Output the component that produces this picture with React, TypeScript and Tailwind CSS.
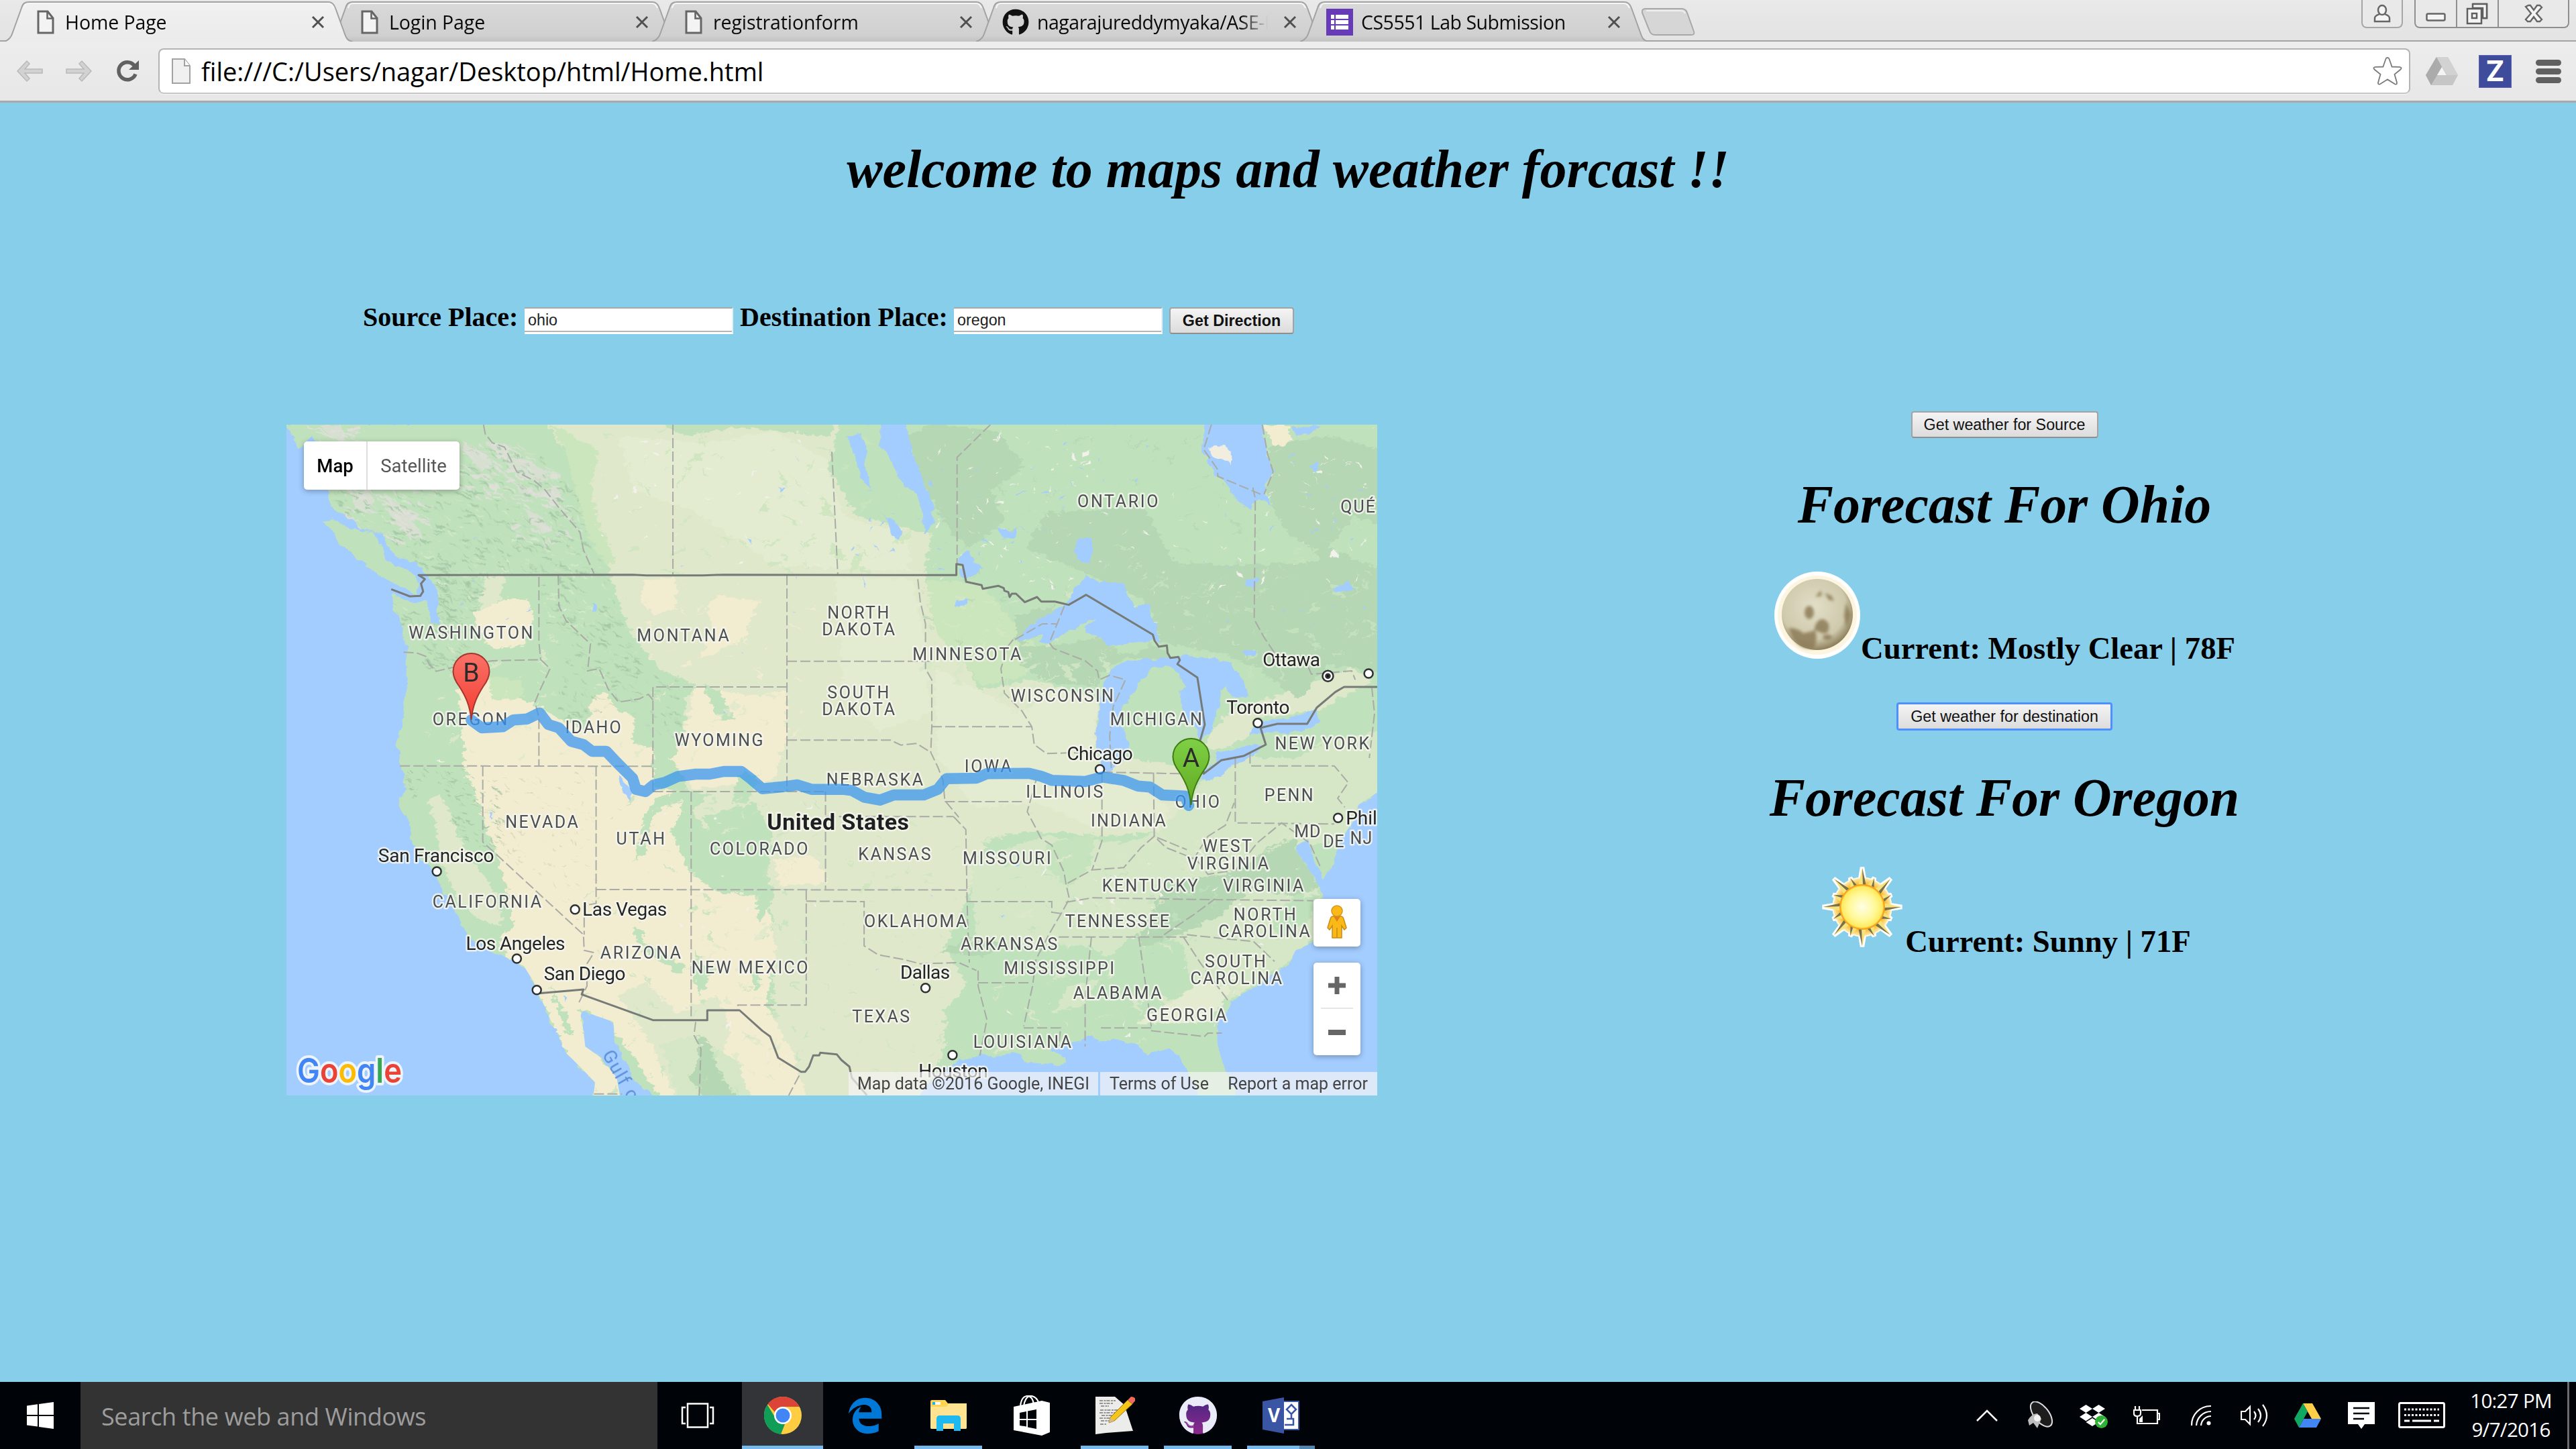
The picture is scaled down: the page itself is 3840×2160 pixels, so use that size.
import type { ReactNode } from "react";
import { FaDropbox, FaEdgeLegacy, FaGithub } from "react-icons/fa";

/* ------------------------------------------------------------------ */
/* Browser chrome                                                      */
/* ------------------------------------------------------------------ */

function PageIcon() {
  return (
    <svg viewBox="0 0 26 36" className="h-9 w-[26px]">
      <path d="M2 2h14l8 10v22H2z" fill="#f3f3f3" stroke="#666" strokeWidth="3" />
      <path d="M15.500 2v10.500H24" fill="none" stroke="#666" strokeWidth="2.600" />
    </svg>
  );
}

function FormIcon() {
  return (
    <svg viewBox="0 0 40 40" className="h-10 w-10">
      <rect width="40" height="40" fill="#673ab7" />
      <g fill="#fff">
        <rect x="7" y="9" width="5" height="6" />
        <rect x="14" y="9" width="19" height="6" />
        <rect x="7" y="17" width="5" height="6" />
        <rect x="14" y="17" width="19" height="6" />
        <rect x="7" y="25" width="5" height="6" />
        <rect x="14" y="25" width="19" height="6" />
      </g>
    </svg>
  );
}

function Tab({ icon, title, active, tight }: { icon: ReactNode; title: string; active?: boolean; tight?: boolean }) {
  return (
    <div className={`relative -mr-[37px] flex h-[62px] w-[520px] shrink-0 items-center ${active ? "z-10" : ""}`}>
      <svg viewBox="0 0 520 62" className="absolute inset-0 h-[62px] w-[520px]">
        <defs>
          <linearGradient id={active ? "tabOn" : "tabOff"} x1="0" y1="0" x2="0" y2="1">
            <stop offset="0" stopColor={active ? "#f1f1f1" : "#d9d9d9"} />
            <stop offset=".85" stopColor={active ? "#ececec" : "#d0d0d0"} />
            <stop offset="1" stopColor={active ? "#ececec" : "#c2c2c2"} />
          </linearGradient>
        </defs>
        <path
          d="M0 62C8 60 11 55 13 48L26 12C28 5 31 3 37 3H483C489 3 492 6 494 12L507 48C510 57 512 61 520 62Z"
          fill={active ? "url(#tabOn)" : "url(#tabOff)"}
        />
        <path
          d="M0 62C8 60 11 55 13 48L26 12C28 5 31 3 37 3H483C489 3 492 6 494 12L507 48C510 57 512 61 520 62"
          fill="none"
          stroke="#a2a2a2"
          strokeWidth="2"
        />
        <path d="M30 12C31 7 33 5 38 5H482C487 5 489 7 491 12" fill="none" stroke="#f6f6f6" strokeWidth="2" />
      </svg>
      <div className={`relative flex shrink-0 justify-center pt-1 ${tight ? "ml-[39px] w-10" : "ml-[49px] w-[26px]"}`}>{icon}</div>
      <div
        className={`relative w-[344px] shrink-0 overflow-hidden pt-1 text-[28.500px] leading-10 whitespace-nowrap text-[#0a0a0a] [mask-image:linear-gradient(to_right,black_88%,transparent)] ${tight ? "ml-[12px] -tracking-[0.480px]" : "ml-[16px] -tracking-[0.100px]"}`}
      >
        {title}
      </div>
      <svg viewBox="0 0 20 20" className="relative mt-1 ml-[23px] h-5 w-5 shrink-0">
        <path d="M2 2L18 18M18 2L2 18" stroke="#505050" strokeWidth="3" />
      </svg>
    </div>
  );
}

function WindowButtons() {
  return (
    <div className="ml-auto flex h-[42px] items-start pr-[10px]">
      <div className="mr-[17px] flex h-[42px] w-[62px] items-center justify-center rounded-b-lg border-2 border-t-0 border-[#a6a6a6] bg-[#e9e9e9]">
        <svg viewBox="0 0 26 28" className="h-7 w-[26px]" fill="#f4f4f4" stroke="#666" strokeWidth="2.500">
          <path d="M2 26v-5c0-4 5-5 7-6h8c2 1 7 2 7 6v5z" />
          <ellipse cx="13" cy="9" rx="6" ry="7" />
        </svg>
      </div>
      <div className="flex h-[42px] w-[231px] overflow-hidden rounded-b-lg border-2 border-t-0 border-[#8f8f8f] bg-[#e9e9e9]">
        <div className="flex w-[62px] items-center justify-center border-r-2 border-[#8f8f8f] pt-3">
          <svg viewBox="0 0 30 14" className="h-[14px] w-[30px]">
            <rect x="1.500" y="1.500" width="27" height="10" rx="2" fill="#f5f5f5" stroke="#666" strokeWidth="2.500" />
          </svg>
        </div>
        <div className="flex w-[62px] items-center justify-center border-r-2 border-[#8f8f8f]">
          <svg viewBox="0 0 34 34" className="h-[34px] w-[34px]" fill="#f5f5f5" stroke="#5f5f5f" strokeWidth="2.500">
            <path d="M10 3h21v21h-6" />
            <path d="M10 3v6h15v15h6V3z" />
            <rect x="2" y="10" width="21" height="22" />
            <rect x="9" y="17" width="7" height="7" />
          </svg>
        </div>
        <div className="flex flex-1 items-center justify-center">
          <svg viewBox="0 0 28 28" className="h-7 w-7">
            <path d="M2 4l4-2h3l5 7 5-7h4l3 3-8 9 8 9-3 3h-4l-5-7-5 7H5l-3-3 8-9z" fill="#f5f5f5" stroke="#666" strokeWidth="2.400" />
          </svg>
        </div>
      </div>
    </div>
  );
}

function Browser() {
  return (
    <header className="h-[153px] border-b-[3px] border-[#a9a9a9] bg-[#ebebeb] font-['Open_Sans',sans-serif]">
      <div className="flex h-[62px] items-start bg-[linear-gradient(#e9e9e9,#e3e3e3)] pl-[6px] shadow-[inset_0_-2px_0_#a4a4a4]">
        <Tab active icon={<PageIcon />} title="Home Page" />
        <Tab icon={<PageIcon />} title="Login Page" />
        <Tab icon={<PageIcon />} title="registrationform" />
        <Tab tight icon={<FaGithub className="h-10 w-10 text-[#111]" />} title="nagarajureddymyaka/ASE-Lab" />
        <Tab tight icon={<FormIcon />} title="CS5551 Lab Submission" />
        <svg viewBox="0 0 84 42" className="mt-[12px] ml-[61px] -translate-x-[37px] h-[42px] w-[84px] shrink-0">
          <path d="M8 1H62q6 0 8 6l10 28q2 5-4 5H22q-6 0-8-6L3 7Q2 1 8 1z" fill="#d6d6d6" stroke="#a8a8a8" strokeWidth="2" />
          <path d="M9 4H61q4 0 6 4" fill="none" stroke="#efefef" strokeWidth="2" />
        </svg>
        <WindowButtons />
      </div>
      <div className="flex h-[88px] items-center bg-[linear-gradient(#ededed,#e7e7e7)] pl-[24px]">
        <svg viewBox="0 0 42 34" className="h-[34px] w-[42px]">
          <path d="M2 17L16 2l4 4-7 8h26v6H13l7 8-4 4z" fill="#d2d2d2" stroke="#b9b9b9" strokeWidth="1.500" />
        </svg>
        <svg viewBox="0 0 42 34" className="ml-[30px] h-[34px] w-[42px]">
          <path d="M40 17L26 2l-4 4 7 8H3v6h26l-7 8 4 4z" fill="#d2d2d2" stroke="#b9b9b9" strokeWidth="1.500" />
        </svg>
        <svg viewBox="0 0 36 36" className="ml-[35px] h-9 w-9">
          <path d="M29 22.500a13 13 0 1 1-2-13" fill="none" stroke="#616161" strokeWidth="5.500" />
          <path d="M34 2v14H19z" fill="#616161" />
        </svg>
        <div className="ml-[27px] flex h-[68px] w-[3357px] items-center rounded-lg border-2 border-[#b4b4b4] border-b-[#c6c6c6] bg-white pl-[17px] shadow-[0_1px_0_#f6f6f6]">
          <svg viewBox="0 0 30 40" className="h-10 w-[30px]">
            <path d="M2 2h18l8 10v26H2z" fill="#f0f0f0" stroke="#a2a2a2" strokeWidth="2" />
            <path d="M20 2v10h8" fill="#fff" stroke="#a2a2a2" strokeWidth="2" />
          </svg>
          <span className="ml-[15px] text-[38px] leading-[60px] text-black">file:///C:/Users/nagar/Desktop/html/Home.html</span>
          <svg viewBox="0 0 44 44" className="mr-[10px] ml-auto h-11 w-11">
            <path
              d="M22 2q2 0 2.600 2l4 11.500 11.500.4q4 .6 1.400 3.600l-9 7.300 3.400 12q.6 4-3 2.400L22 34.400l-10.900 6.800q-3.600 1.600-3-2.400l3.400-12-9-7.300q-2.600-3 1.400-3.600l11.500-.4 4-11.500Q20 2 22 2z"
              fill="#fff"
              stroke="#7a7a7a"
              strokeWidth="1.800"
            />
          </svg>
        </div>
        <svg viewBox="0 0 48 42" className="ml-[23px] h-[42px] w-12">
          <path d="M16 0h17l15 27-8 15H8L0 27z" fill="#c6c6c6" />
          <path d="M16 0L0 27l8 15 16-27z" fill="#ababab" />
          <path d="M16 0h17l15 27H32z" fill="#d2d2d2" />
          <path d="M24 15l7 12H17z" fill="#f4f4f4" />
        </svg>
        <div className="ml-[31px] flex h-[49px] w-[49px] items-center justify-center border border-[#5964b5] bg-[#3f4b9b] font-['Inter',sans-serif] text-[42px] leading-none font-bold text-white">
          Z
        </div>
        <div className="ml-[36px] flex flex-col gap-1">
          <div className="h-[9px] w-[38px] rounded-full bg-[#606060]" />
          <div className="h-[9px] w-[38px] rounded-full bg-[#606060]" />
          <div className="h-[9px] w-[38px] rounded-full bg-[#606060]" />
        </div>
      </div>
    </header>
  );
}

/* ------------------------------------------------------------------ */
/* Map: geometry is kept in a 3136 x 3030 survey grid                   */
/* ------------------------------------------------------------------ */

const GRID = "translate(420 630) scale(0.52296 0.33333)";
const gx = (x: number) => 420 + x * 0.52296;
const gy = (y: number) => 630 + y / 3;

const LAND =
  "13,9 50,110 90,60 120,160 130,300 150,400 200,430 225,470 290,500 300,560 330,600 390,620 400,670 425,700 440,760 450,900 425,900 415,800 370,800 315,762 320,850 335,880 345,940 357,1000 357,1150 345,1350 328,1430 337,1530 350,1590 348,1650 335,1720 365,1790 372,1880 400,1960 440,2010 450,2070 480,2150 525,2270 530,2300 610,2370 640,2395 690,2430 718,2500 730,2550 755,2630 785,2740 805,2810 850,2880 893,2950 888,3020 965,3020 955,2930 910,2840 865,2790 860,2720 852,2650 860,2630 900,2655 945,2680 950,2760 970,2830 1000,2930 1065,3020 1812,3020 1850,2940 1935,2850 1960,2840 2000,2828 2050,2832 2090,2815 2120,2860 2190,2870 2240,2865 2215,2820 2190,2795 2240,2780 2280,2765 2310,2740 2330,2765 2370,2755 2440,2780 2465,2830 2530,2798 2570,2850 2590,2930 2620,3020 2725,3020 2690,2900 2668,2790 2665,2700 2700,2620 2705,2590 2780,2520 2870,2420 2890,2360 2945,2320 2990,2240 2965,2110 2950,2050 2920,1980 2885,1900 2925,1860 2945,1960 2970,2050 3005,1940 3020,1860 3060,1770 3068,1710 3136,1640 3136,0 2795,0 2805,110 2825,220 2800,310 2818,370 2785,335 2760,390 2725,350 2700,290 2665,240 2625,130 2628,0 13,0";

const COVER: [string, string][] = [
  // prairie and plains
  ["#dfe8ca", "750,0 830,170 850,350 880,500 925,620 942,700 970,850 1000,960 1080,1100 1150,1200 1150,1700 1400,2200 1400,3020 1830,3020 1890,2780 1950,2500 1890,2350 1960,2100 2010,1850 2190,1830 2350,1850 2500,1830 2620,1700 2580,1540 2330,1480 2330,1230 2130,1150 1990,1200 1900,950 1830,700 1850,500 1640,420 1560,200 1590,0"],
  ["#e3ebd0", "960,60 1200,90 1400,40 1550,160 1600,420 1790,500 1790,660 1400,640 1180,400 1000,300"],
  ["#cbe5bd", "760,0 900,120 880,330 910,480 950,620 930,640 870,500 840,300 800,100"],
  ["#bfe0ba", "1080,0 1140,60 1300,20 1568,60 1568,0"],
  ["#cbe5bd", "1840,700 1990,720 2090,900 2150,1000 2120,1130 2000,1180 1900,1000 1850,900"],
  ["#e3ebd0", "1860,1100 2020,1220 2100,1300 2220,1180 2320,1240 2320,1500 2400,1600 2540,1720 2500,1820 2300,1800 2150,1700 1980,1720 1870,1500"],
  ["#e3ebd0", "1580,700 1800,700 1830,960 1850,1300 1700,1380 1600,1200"],
  // eastern mixed country
  ["#d5e7c6", "1960,1960 2180,1850 2400,1880 2500,1830 2650,1560 2760,1480 3136,1380 3136,1640 3030,1860 2890,1900 2950,2060 2980,2240 2880,2400 2700,2580 2500,2520 2300,2340 1980,2330"],
  ["#dfe8ca", "2620,1450 2700,1290 2800,1240 2960,1150 3050,1100 3110,1160 3020,1230 2960,1290 2780,1320 2760,1400 2680,1460"],
  ["#c5e3bd", "2180,1880 2320,1840 2300,2000 2240,2080 2190,2000"],
  ["#bfe1bb", "1920,2330 2060,2340 2200,2400 2300,2480 2420,2300 2560,2320 2600,2500 2560,2650 2700,2700 2700,3020 2600,3020 2560,2820 2460,2800 2300,2740 2120,2700 2080,2420 2000,2430 2100,2700 2010,2780 1890,2800 1890,2620 1970,2500"],
  ["#bfe1bb", "2830,2200 2900,2100 2960,2120 2920,2240 2830,2320"],
  ["#e3ebd0", "2560,2560 2620,2500 2700,2520 2680,2600 2640,2680 2430,2690 2480,2640"],
  ["#d5e7c6", "2240,2520 2330,2490 2290,2600 2200,2640"],
  ["#b6d7b3", "2440,2300 2520,2060 2700,2020 2750,1980 2830,1880 2890,1860 2960,2080 2880,2120 2760,2080 2680,2200 2560,2290 2450,2350"],
  ["#b6d7b3", "1880,2370 1960,2300 2050,2330 2000,2390"],
  ["#bfe0ba", "2740,1420 2800,1400 2960,1450 2880,1500 2780,1500"],
  // boreal shield
  ["#b6d7b3", "1780,60 1860,0 2040,40 2120,200 2020,300 2060,440 1960,560 1900,480 1820,260"],
  ["#b6d7b3", "2120,560 2180,400 2460,380 2540,620 2720,640 2950,620 2980,560 3136,660 3136,1120 2980,1080 2900,1240 2800,1120 2700,1040 2500,980 2470,820 2420,760 2330,700"],
  ["#b6d7b3", "2820,100 2980,60 3136,120 3136,460 3060,420 2960,600 2860,480 2800,300"],
  ["#b6d7b3", "2090,860 2200,820 2210,900 2100,1000 2180,1000 2340,960 2400,1040 2500,1000 2540,1060 2400,1060 2340,1110 2330,1180 2180,1160 2100,1080"],
  ["#f2ecd0", "2795,10 2870,10 2880,80 2830,110"],
  // high desert
  ["#f2ecd0", "545,850 620,800 700,790 720,860 690,1000 600,1010 560,940"],
  ["#dfe8ca", "580,690 640,680 620,800 560,840"],
  ["#f2ecd0", "500,1150 560,1120 690,1240 730,1270 800,1330 870,1380 880,1240 920,1200 960,1290 1010,1320 1000,1420 1060,1470 1060,1640 1170,1650 1110,1820 1160,2000 1240,2100 1380,2120 1410,2360 1380,2600 1450,2800 1500,3020 1080,3020 960,2740 850,2620 880,2800 970,2940 980,3020 870,3020 730,2540 620,2350 640,2240 600,2130 560,1800 520,1500"],
  ["#f2ecd0", "1180,1180 1260,1200 1350,1220 1440,1200 1440,1400 1400,1600 1180,1640 1110,1520 1150,1380"],
  ["#f2ecd0", "1030,700 1120,690 1130,760 1110,840 1060,860 1025,800"],
  ["#f2ecd0", "1240,770 1360,800 1320,960 1240,1030 1190,1060 1230,920 1210,830"],
  ["#f2ecd0", "1400,1950 1520,1940 1560,2060 1420,2070"],
  ["#dfe8ca", "960,2560 1040,2500 1130,2640 1240,2560 1280,2700 1220,3020 1120,3020 1060,2800"],
  ["#d5e7c6", "1080,2780 1170,2740 1300,2860 1340,3020 1130,3020"],
  ["#dfe8ca", "420,1680 460,1660 520,1840 600,2000 640,2160 620,2250 560,2220 500,2120 460,1980 440,1820"],
  ["#bfe1bb", "420,1560 520,1530 560,1700 600,1880 640,2060 660,2260 640,2280 600,2080 520,1900 460,1680"],
  ["#bfe1bb", "770,2510 790,2600 815,2660 830,2740 812,2740 780,2600"],
  ["#bfe1bb", "1150,1640 1230,1660 1160,1740 1140,1690 1060,1740 1040,1920 1010,1960 1030,1790 1060,1680"],
  ["#bfe1bb", "1200,1760 1350,1700 1400,1850 1380,2020 1410,2100 1360,2250 1350,2090 1220,2080 1180,1980 1230,1900"],
  ["#bfe1bb", "1000,2280 1015,2250 1040,2330 1100,2380 1160,2440 1130,2460 1040,2370"],
  ["#bfe1bb", "1060,1110 1130,1130 1180,1180 1140,1250 1140,1430 1090,1400 1060,1250 1040,1180"],
  ["#bfe1bb", "1310,1560 1360,1580 1330,1700 1280,1700"],
  ["#bfe1bb", "1200,1170 1250,1200 1290,1330 1250,1330"],
  ["#bfe1bb", "1190,2560 1240,2440 1200,2420 1180,2360 1170,2480"],
  ["#bfe1bb", "1340,2440 1365,2420 1360,2540 1345,2540"],
  ["#b6d7b3", "1180,2740 1215,2760 1240,2880 1300,3020 1200,3020 1160,2920 1195,2860"],
  ["#cbe5bd", "590,1140 680,1150 690,1230 600,1240"],
];

const WATER: string[] = [
  // Superior
  "2233,815 2248,770 2293,690 2333,710 2398,715 2418,790 2438,820 2480,818 2476,860 2498,900 2493,950 2505,985 2478,975 2418,985 2388,1005 2358,1000 2338,960 2293,945 2288,910 2323,880 2303,880 2258,920 2228,945 2193,985 2158,985 2168,945 2090,975 2158,880",
  // Michigan
  "2368,1090 2418,1065 2468,1055 2553,1070 2528,1090 2483,1090 2448,1150 2428,1210 2388,1290 2393,1350 2413,1440 2403,1500 2358,1570 2333,1530 2318,1400 2328,1300 2338,1200 2348,1150",
  // Huron
  "2500,1055 2568,1040 2658,1055 2698,1070 2738,1150 2758,1225 2718,1230 2683,1170 2678,1230 2648,1380 2618,1425 2608,1370 2568,1310 2558,1200 2578,1180 2548,1110 2500,1080",
  // Erie
  "2653,1530 2668,1480 2748,1445 2808,1440 2768,1490 2698,1550 2653,1600 2618,1600 2628,1560",
  // Ontario
  "2758,1390 2778,1340 2868,1320 2928,1290 2953,1280 2956,1340 2918,1380 2838,1388 2783,1396",
  // Winnipeg and Manitoba
  "1708,0 1775,0 1808,180 1858,370 1858,450 1833,505 1826,400 1808,320 1768,270 1728,150 1703,100",
  "1698,400 1738,430 1771,495 1753,525 1736,500 1723,420",
  "1610,60 1650,50 1670,120 1660,200 1680,300 1655,260 1640,180",
  // Nipigon, Lake of the Woods
  "2268,520 2308,515 2310,580 2300,630 2270,615 2258,560",
  "1930,600 1960,570 1975,620 2000,650 1970,690 1935,690",
  "2040,470 2070,490 2100,470 2090,520 2060,515",
  "1920,790 1955,790 1950,820 1920,825",
  "430,700 440,760 437,830 450,900 440,890 425,800 415,760",
  "960,1580 975,1600 995,1650 992,1690 970,1650",
  "885,800 897,820 895,850 885,840",
  "800,2560 815,2570 812,2590",
  "2745,1020 2780,1020 2775,1040 2745,1035",
  "3000,740 3040,710 3050,750 3010,760",
  "2745,700 2780,700 2775,730 2750,730",
  "590,1740 600,1740 598,1775",
  "1420,285 1435,290 1420,308",
  "1330,525 1340,530 1332,545",
  "2930,190 2955,180 2950,230",
  "2880,20 2960,9 2930,50 2890,60",
];

const RELIEF: string[] = [
  "60,0 560,0 620,40 760,180 850,340 870,520 930,680 960,850 990,980 1040,1100 1130,1150 1140,1400 1080,1430 1000,1300 930,1260 880,1380 760,1300 760,1050 740,690 600,690 560,820 540,1000 500,1150 490,1500 560,1600 600,1900 640,2060 660,2300 760,2420 700,2440 640,2300 560,2060 470,1700 420,1560 380,1680 340,1650 335,1000 320,790 440,880 400,640 290,520 150,420 120,100",
  "560,1600 890,1560 900,2100 860,2280 700,2000 600,1900",
  "1060,1650 1380,1660 1420,2080 1190,2100 1150,1900 1010,1980",
  "2440,2300 2520,2060 2750,1980 2890,1860 2960,2080 2760,2100 2560,2290",
];

const SNOW =
  "110,20 170,10 180,70 140,60M200,310 240,300 270,350 250,380 210,390M300,330 350,380 400,410 370,440 400,500 360,520 340,460 310,420M515,90 560,120 600,180 570,220 530,150M580,80 650,110 640,160 690,160 740,210 760,260 700,260 650,200M620,200 680,280 720,300 700,340 650,260M740,300 790,280 800,350 770,370M690,380 740,420 765,490 740,490 700,420M740,520 765,540 755,580";

const STATES: string[] = [
  "1115,9 1115,680",
  "575,9 580,50 600,90 635,110 670,220 720,260 750,300 790,380 850,490 860,570 890,675",
  "1568,130 1585,680",
  "2020,9 1925,155 1925,632",
  "2768,290 2775,340 2772,880 2800,960 2830,1030",
  "2650,9 2628,120 2668,210 2668,240 2790,320",
  "2795,9 2810,140 2826,220 2800,320",
  "733,690 733,980 738,1060",
  "347,1027 385,1030 410,1045 420,1080 440,1112 500,1090 600,1065 738,1060",
  "738,1060 765,1100 735,1200 722,1250 733,1320 733,1535",
  "788,682 790,820 810,885 880,990 872,1110 905,1100 930,1190 960,1250 1020,1235 1045,1215 1058,1240",
  "1440,1182 1058,1182 1058,1650",
  "1058,1650 1550,1650",
  "1440,682 1440,1650",
  "1440,1067 1850,1067",
  "1440,1420 1735,1420 1765,1442 1810,1435 1850,1475",
  "1813,700 1820,800 1835,900 1835,1100 1853,1150 1853,1360 1850,1475 1870,1540 1885,1600 1890,1690 1930,1765",
  "1853,1360 2138,1360",
  "2085,970 2070,1000 2050,1100 2060,1210 2110,1290 2138,1360 2145,1440 2180,1480 2240,1477 2330,1477",
  "2090,970 2168,900 2208,900",
  "2231,820 2188,985 2200,1010 2290,1065 2325,1110 2330,1150 2360,1130 2405,1150 2370,1270 2360,1400 2365,1560",
  "1550,1762 1915,1762",
  "1550,1650 1550,2087",
  "337,1535 1058,1537",
  "573,1537 573,1875 860,2290 862,2360 890,2370 870,2420 870,2520 845,2600",
  "896,1537 896,2150 862,2160 862,2290",
  "1167,1650 1167,2670",
  "896,2088 1953,2090",
  "1495,2090 1495,2605 1300,2605 1300,2630",
  "1495,2140 1660,2142 1660,2340 1700,2380 1770,2400 1820,2420 1930,2415 1980,2450",
  "1915,1762 1950,1820 1953,2090 1955,2230 1960,2415",
  "1955,2142 2195,2142 2195,2190 2220,2195",
  "1890,1695 2110,1695",
  "2150,1600 2125,1740 2165,1860 2195,1890 2230,2010 2235,2060 2245,2130 2220,2200 2190,2280 2150,2400 2140,2520 2115,2700",
  "1985,2505 2130,2505",
  "1985,2450 1985,2520 2010,2670 1990,2830",
  "2115,2707 2220,2707 2215,2790",
  "2308,2300 2290,2570 2290,2790",
  "2215,2300 2580,2300",
  "2235,2145 2310,2125 2600,2132 2940,2138",
  "2338,1565 2338,1870 2310,2000",
  "2485,1565 2487,1850 2580,1910",
  "2240,2060 2310,2000 2400,1990 2450,1900 2487,1850 2520,1900 2600,1950 2640,1850 2690,1800 2715,1700",
  "2340,1563 2560,1570",
  "2718,1500 2718,1790 3000,1795",
  "2760,1480 2760,1535 3000,1535 3040,1610 3010,1680 3030,1720",
  "2610,1960 2640,2020 2720,2000 2780,1880 2850,1790 2930,1880 2960,1985",
  "2443,2300 2470,2600 2480,2720 2630,2745 2640,2730 2680,2730",
  "2335,2707 2480,2707",
  "2570,2300 2620,2420 2700,2590",
  "2515,2290 2600,2200 2660,2130",
  "2580,2290 2700,2310 2770,2320 2830,2410",
  "3107,1182 3115,1300 3100,1500",
  "2925,1090 2935,1125 3050,1110 3060,1150",
  "1180,2680 1175,2740 1195,2800 1190,3009",
  "1475,2920 1445,3009",
  "890,3002 970,3002",
];

const BORDERS: string[] = [
  "312,745 365,777 395,775 403,755 397,720 408,700 390,682 1000,680 1040,683 1200,683 1260,680 1923,682 1923,632 1941,637 1951,712 1995,727 1998,743 2043,730 2058,740 2060,752 2071,758 2075,780 2081,765 2093,765 2118,803 2153,780 2165,800 2203,800 2243,815 2293,770 2483,948 2488,975 2500,1002 2523,997 2525,1030 2533,1052 2556,1048 2560,1062 2553,1080 2610,1140 2631,1350 2618,1420 2628,1570 2678,1510 2743,1490 2805,1440 2790,1365 2838,1347 2923,1347 2950,1275 3003,1205 3028,1182 3123,1182",
  "735,2552 860,2535 855,2557 1058,2672 1213,2672 1213,2628 1305,2628 1370,2720 1392,2745 1415,2840 1480,2903 1492,2903 1503,2880 1515,2830 1532,2830 1535,2818 1568,2823 1582,2825 1595,2850 1618,2880 1625,2930 1668,3008",
];

const ROUTE =
  "540,1330 570,1365 630,1360 660,1330 700,1325 735,1298 760,1350 790,1365 825,1425 860,1440 885,1470 925,1470 955,1520 1000,1590 1010,1640 1037,1650 1060,1620 1090,1610 1130,1582 1180,1572 1220,1572 1260,1560 1310,1560 1335,1590 1370,1637 1420,1630 1470,1620 1510,1640 1600,1640 1625,1645 1660,1675 1705,1688 1745,1665 1830,1665 1870,1640 1885,1610 1895,1592 1980,1590 2010,1570 2130,1568 2165,1582 2195,1600 2290,1605 2340,1585 2400,1600 2440,1625 2475,1630 2510,1665 2575,1670 2585,1712";

type Label = [text: string, left: number, right: number, baseline: number];

const STATE_LABELS: Label[] = [
  ["WASHINGTON", 362, 716, 965],
  ["MONTANA", 1012, 1275, 977],
  ["OREGON", 430, 643, 1352],
  ["IDAHO", 808, 967, 1390],
  ["WYOMING", 1120, 1372, 1445],
  ["NORTH", 1555, 1731, 875],
  ["DAKOTA", 1540, 1748, 950],
  ["SOUTH", 1555, 1731, 1232],
  ["DAKOTA", 1540, 1748, 1307],
  ["ONTARIO", 2268, 2498, 377],
  ["QUÉ", 3018, 3117, 403],
  ["MINNESOTA", 1798, 2108, 1062],
  ["WISCONSIN", 2078, 2371, 1247],
  ["MICHIGAN", 2361, 2623, 1352],
  ["NEW YORK", 2831, 3100, 1460],
  ["IOWA", 1946, 2080, 1563],
  ["NEVADA", 637, 845, 1813],
  ["UTAH", 953, 1092, 1888],
  ["COLORADO", 1220, 1500, 1933],
  ["CALIFORNIA", 430, 740, 2170],
  ["ARIZONA", 908, 1138, 2398],
  ["NEW MEXICO", 1168, 1500, 2463],
  ["NEBRASKA", 1552, 1828, 1622],
  ["ILLINOIS", 2121, 2341, 1678],
  ["OHIO", 2546, 2673, 1723],
  ["PENN", 2801, 2940, 1693],
  ["INDIANA", 2306, 2520, 1807],
  ["MD", 2886, 2961, 1855],
  ["DE", 2968, 3028, 1900],
  ["NJ", 3045, 3108, 1885],
  ["WEST", 2625, 2765, 1920],
  ["VIRGINIA", 2581, 2813, 1997],
  ["KENTUCKY", 2338, 2611, 2098],
  ["VIRGINIA", 2683, 2913, 2098],
  ["NORTH", 2713, 2891, 2225],
  ["CAROLINA", 2670, 2931, 2300],
  ["KANSAS", 1643, 1850, 1957],
  ["MISSOURI", 1941, 2193, 1975],
  ["OKLAHOMA", 1660, 1953, 2255],
  ["TENNESSEE", 2233, 2530, 2255],
  ["ARKANSAS", 1935, 2211, 2357],
  ["MISSISSIPPI", 2058, 2373, 2465],
  ["SOUTH", 2631, 2805, 2437],
  ["CAROLINA", 2590, 2851, 2512],
  ["ALABAMA", 2256, 2508, 2578],
  ["GEORGIA", 2465, 2693, 2675],
  ["TEXAS", 1626, 1790, 2683],
  ["LOUISIANA", 1971, 2251, 2797],
];

const CITY_LABELS: Label[] = [
  ["Ottawa", 2796, 2960, 1088],
  ["Toronto", 2693, 2873, 1302],
  ["Chicago", 2238, 2426, 1508],
  ["San Francisco", 275, 605, 1965],
  ["Las Vegas", 857, 1098, 2205],
  ["Los Angeles", 525, 808, 2357],
  ["San Diego", 747, 980, 2493],
  ["Dallas", 1763, 1905, 2487],
  ["Houston", 1815, 2013, 2928],
  ["Phil", 3033, 3120, 1797],
];

const CITY_DOTS: [number, number][] = [
  [442, 2007],
  [836, 2177],
  [670, 2397],
  [727, 2537],
  [1835, 2528],
  [1912, 2828],
  [2332, 1550],
  [3011, 1768],
  [2782, 1343],
  [3098, 1122],
];

/** Small irregular land-cover patches, spread by a fixed-seed generator. */
function patches(seed: number, count: number, x0: number, y0: number, x1: number, y1: number, size: number, slant = 0) {
  let s = seed * 7919;
  const next = () => {
    s = (s * 16807) % 2147483647;
    return s / 2147483647;
  };
  let d = "";
  for (let i = 0; i < count; i++) {
    const x = x0 + next() * (x1 - x0);
    const y = y0 + next() * (y1 - y0);
    const w = size * (0.3 + next());
    const h = size * (0.4 + next() * 1.6);
    const side = slant ? 1 : next() > 0.5 ? 1 : -1;
    const k = slant * h;
    d += `M${x.toFixed(0)} ${y.toFixed(0)}l${(side * w * next()).toFixed(0)} ${(h * 0.4).toFixed(0)}l${(side * w * 0.5 + k).toFixed(0)} ${(h * next()).toFixed(0)}l${(-side * w * next()).toFixed(0)} ${(-h * 0.3).toFixed(0)}z`;
  }
  return d;
}

/** Patches with their own crisp edges: bare ground and small lakes. */
const SPECKS: [string, string][] = [
  ["#f3f1ec", patches(11, 90, 1860, 20, 2330, 720, 17)],
  ["#f3f1ec", patches(12, 55, 2800, 20, 3120, 700, 20)],
  ["#f3f1ec", patches(13, 40, 2330, 300, 2760, 900, 14)],
  ["#f3f1ec", patches(14, 45, 860, 30, 1560, 640, 18)],
  ["#f3f1ec", patches(15, 60, 2050, 1900, 2930, 2760, 18)],
  ["#f3f1ec", patches(16, 40, 1000, 1700, 1520, 2900, 14)],
  ["#f3f1ec", patches(17, 30, 420, 700, 1000, 1500, 14)],
  ["#a3ccff", patches(21, 60, 1620, 20, 2250, 700, 16)],
  ["#a3ccff", patches(22, 36, 2780, 40, 3120, 900, 16)],
  ["#a3ccff", patches(23, 26, 2260, 60, 2780, 900, 12)],
  ["#a3ccff", patches(24, 26, 480, 40, 1500, 1400, 9)],
  ["#a3ccff", patches(25, 24, 1560, 1500, 2600, 2700, 9)],
];

/** Vegetation patches that take the ragged edge of the land cover. */
const PATCHES: [string, string][] = [
  ["#cbe5bd", patches(31, 80, 880, 20, 1850, 660, 40)],
  ["#dfe8ca", patches(32, 90, 1180, 1150, 1500, 2950, 34)],
  ["#c6e3be", patches(33, 110, 880, 1600, 1560, 2980, 26)],
  ["#dfe8ca", patches(34, 70, 1950, 1800, 2950, 2760, 42)],
  ["#b6d7b3", patches(35, 130, 1820, 20, 2800, 1000, 30)],
  ["#c8e4c0", patches(36, 110, 2350, 500, 3120, 1100, 34)],
  ["#bfe1bb", patches(37, 60, 1960, 1850, 2700, 2400, 26)],
  ["#dfe8ca", patches(38, 70, 420, 720, 1060, 1480, 26)],
  ["#cbe5bd", patches(39, 60, 1600, 1700, 1960, 2900, 24)],
  ["#d5e7c6", patches(40, 80, 1850, 720, 2350, 1250, 34)],
  ["#f2ecd0", patches(41, 50, 1000, 700, 1500, 1500, 28)],
];

/** Hill shading: short slanted strokes, dark on one side and light on the other. */
const RANGES: [string, string][] = [
  ["#a3c7a5", patches(51, 700, 140, 100, 960, 900, 20, 0.35)],
  ["#d6ebcf", patches(52, 420, 140, 100, 960, 900, 15, 0.35)],
  ["#a3c7a5", patches(53, 200, 400, 650, 560, 1100, 15, 0.35)],
  ["#a3c7a5", patches(54, 240, 780, 850, 1130, 1400, 16, 0.35)],
  ["#a3c7a5", patches(55, 180, 350, 1530, 620, 1900, 14, 0.35)],
  ["#ddd6b8", patches(56, 200, 600, 1560, 890, 2280, 12, 0.2)],
  ["#e1dfda", patches(57, 110, 160, 230, 420, 530, 20, 0.5)],
  ["#e1dfda", patches(58, 130, 500, 90, 780, 330, 22, 0.5)],
  ["#e1dfda", patches(59, 60, 640, 300, 830, 520, 20, 0.5)],
  ["#e1dfda", patches(60, 40, 60, 10, 200, 90, 20, 0.5)],
];

function Pin({ x, y, letter, from, to, edge }: { x: number; y: number; letter: string; from: string; to: string; edge: string }) {
  return (
    <g transform={`translate(${x} ${y})`}>
      <defs>
        <linearGradient id={`pin${letter}`} x1="0" y1="0" x2="0" y2="1">
          <stop offset="0" stopColor={from} />
          <stop offset="1" stopColor={to} />
        </linearGradient>
      </defs>
      <path
        d="M0 0C-2-22-9-36-18-50C-24-58-27-65-27-72A27 27 0 0 1 27-72C27-65 24-58 18-50C9-36 2-22 0 0Z"
        fill={`url(#pin${letter})`}
        stroke={edge}
        strokeWidth="2"
      />
      <text y="-57" textAnchor="middle" className="fill-[#2b2b2b] font-['Roboto',sans-serif] text-[39px]">
        {letter}
      </text>
    </g>
  );
}

function MapDrawing() {
  return (
    <svg viewBox="427 633 1626 1000" className="block h-[1000px] w-[1626px]">
      <defs>
        <filter id="ragged" x="-2%" y="-2%" width="104%" height="104%">
          <feTurbulence type="fractalNoise" baseFrequency="0.045" numOctaves="4" seed="4" />
          <feDisplacementMap in="SourceGraphic" scale="36" xChannelSelector="R" yChannelSelector="G" />
        </filter>
        <filter id="coast" x="-2%" y="-2%" width="104%" height="104%">
          <feTurbulence type="fractalNoise" baseFrequency="0.07" numOctaves="3" seed="9" />
          <feDisplacementMap in="SourceGraphic" scale="11" xChannelSelector="R" yChannelSelector="G" />
        </filter>
        <clipPath id="land">
          <polygon points={LAND} />
        </clipPath>
        <clipPath id="mountains">
          {RELIEF.map((p) => (
            <polygon key={p} points={p} />
          ))}
        </clipPath>
      </defs>
      <rect x="427" y="633" width="1626" height="1000" fill="#a3ccff" />
      <g filter="url(#coast)">
        <g transform={GRID}>
          <polygon points={LAND} fill="#bfe1bb" />
          <polygon points="117,440 150,432 190,470 260,490 290,560 300,620 380,680 390,720 380,770 290,700 210,600 165,540 145,490" fill="#bfe1bb" />
        </g>
      </g>
      <g transform={GRID}>
        <g clipPath="url(#land)">
          <g filter="url(#ragged)">
            {COVER.map(([fill, points]) => (
              <polygon key={points} points={points} fill={fill} />
            ))}
            {PATCHES.map(([fill, d]) => (
              <path key={d.slice(0, 24)} d={d} fill={fill} opacity=".8" />
            ))}
          </g>
        </g>
      </g>
      <g filter="url(#coast)">
        <g transform={GRID}>
          <g clipPath="url(#land)">
            {SNOW.split("M").map((p) => (
              <polygon key={p} points={p} fill="#dfded8" opacity=".7" />
            ))}
            <g clipPath="url(#mountains)">
              {RANGES.map(([fill, d]) => (
                <path key={d.slice(0, 24)} d={d} fill={fill} opacity=".9" />
              ))}
            </g>
            {SPECKS.map(([fill, d]) => (
              <path key={d.slice(0, 24)} d={d} fill={fill} />
            ))}
          </g>
          {WATER.map((p) => (
            <polygon key={p} points={p} fill="#a3ccff" />
          ))}
          <polygon points="2640,110 2690,105 2705,130 2708,180 2650,145" fill="#f1eee0" />
        </g>
      </g>
      <g transform={GRID} fill="none">
        <g stroke="#a9aba6" strokeWidth="2" strokeDasharray="15 5">
          {STATES.map((p) => (
            <polyline key={p} points={p} vectorEffect="non-scaling-stroke" />
          ))}
        </g>
        <g stroke="#777b78" strokeWidth="3" strokeLinejoin="round">
          {BORDERS.map((p) => (
            <polyline key={p} points={p} vectorEffect="non-scaling-stroke" />
          ))}
        </g>
      </g>
      <g className="font-['Roboto',sans-serif]" stroke="#f6f6ee" strokeOpacity=".85" strokeWidth="5" strokeLinejoin="round" style={{ paintOrder: "stroke" }}>
        <g className="fill-[#4b4f51] text-[25px]">
          {STATE_LABELS.map(([t, l, r, b]) => (
            <text key={`${t}${l}${b}`} x={gx(l)} y={gy(b)} textLength={gx(r) - gx(l)}>
              {t}
            </text>
          ))}
        </g>
        <g className="fill-[#222425] text-[28px]">
          {CITY_LABELS.map(([t, l, r, b]) => (
            <text key={t} x={gx(l)} y={gy(b)} textLength={t === "Phil" ? undefined : gx(r) - gx(l)}>
              {t}
            </text>
          ))}
        </g>
        <text x={gx(1383)} y={gy(1822)} textLength={gx(1788) - gx(1383)} className="fill-[#1d1f20] text-[34px] font-bold">
          United States
        </text>
      </g>
      <text transform="translate(897 1572) rotate(60)" className="fill-[#5b8fd6] font-['Roboto',sans-serif] text-[27px]" letterSpacing="2">
        Gulf of
      </text>
      <g fill="#fff" stroke="#2f3132" strokeWidth="2.500">
        {CITY_DOTS.map(([x, y]) => (
          <circle key={x} cx={gx(x)} cy={gy(y)} r="6.500" />
        ))}
        <circle cx={gx(2982)} cy={gy(1133)} r="8" />
        <circle cx={gx(2982)} cy={gy(1133)} r="3" fill="#111" />
      </g>
      <g transform={GRID}>
        <polyline
          points={ROUTE}
          fill="none"
          stroke="#3a97f0"
          strokeOpacity=".74"
          strokeWidth="16.500"
          strokeLinecap="round"
          strokeLinejoin="round"
          vectorEffect="non-scaling-stroke"
        />
      </g>
      <Pin x={702.500} y={1073} letter="B" from="#fb7268" to="#f23c30" edge="#a5352d" />
      <Pin x={1775.500} y={1200} letter="A" from="#7fd046" to="#5fa91f" edge="#3f7a14" />
      <g className="font-['Inter',sans-serif] text-[51px] font-semibold" stroke="#eef4fb" strokeWidth="8" strokeLinejoin="round" style={{ paintOrder: "stroke" }}>
        <text x="443" y="1614" textLength="156" lengthAdjust="spacingAndGlyphs">
          <tspan fill="#4285f4">G</tspan>
          <tspan fill="#ea4335">o</tspan>
          <tspan fill="#fbbc05">o</tspan>
          <tspan fill="#4285f4">g</tspan>
          <tspan fill="#34a853">l</tspan>
          <tspan fill="#ea4335">e</tspan>
        </text>
      </g>
    </svg>
  );
}

function MapPanel() {
  return (
    <div className="relative mt-[135px] h-[1000px] w-[1626px] overflow-hidden font-['Roboto',sans-serif]">
      <MapDrawing />
      <div className="absolute top-[25px] left-[26px] flex h-[72px] w-[232px] rounded-[5px] bg-white text-[27.500px] leading-[73px] shadow-[0_2px_8px_rgba(0,0,0,0.3)]">
        <div className="w-[95px] border-r-2 border-[#dedede] text-center font-medium text-black">Map</div>
        <div className="flex-1 text-center text-[#565656]">Satellite</div>
      </div>
      <div className="absolute top-[707px] right-[25px] flex h-[71px] w-[70px] items-center justify-center rounded-[5px] bg-white pb-1 shadow-[0_2px_8px_rgba(0,0,0,0.3)]">
        <svg viewBox="0 0 30 50" className="h-[50px] w-[30px]">
          <path d="M9 17h12q3 0 4 4l4 13-3 3-4-6v18H8V31l-4 6-3-3 4-13q1-4 4-4z" fill="#fbb917" stroke="#c98b16" strokeWidth="1.500" />
          <path d="M10 17l5 8 5-8z" fill="#e0801a" />
          <path d="M15 34v15" stroke="#c98b16" strokeWidth="1.500" />
          <circle cx="15" cy="9" r="8" fill="#fbb917" stroke="#d39518" strokeWidth="1.500" />
        </svg>
      </div>
      <div className="absolute top-[802px] right-[25px] flex h-[138px] w-[70px] flex-col items-center rounded-[5px] bg-white shadow-[0_2px_8px_rgba(0,0,0,0.3)]">
        <div className="flex h-[68px] items-center">
          <svg viewBox="0 0 26 26" className="h-[26px] w-[26px]" fill="#666">
            <path d="M9.500 0h7v9.500H26v7h-9.500V26h-7v-9.500H0v-7h9.500z" />
          </svg>
        </div>
        <div className="h-[2px] w-[48px] bg-[#e6e6e6]" />
        <div className="flex h-[70px] items-center">
          <div className="h-[8px] w-[26px] bg-[#666]" />
        </div>
      </div>
      <div className="absolute right-0 bottom-0 flex h-[35px] gap-[3px] text-[25px] leading-[36px] whitespace-nowrap text-[#444]">
        <div className="w-[372px] bg-[#f5f5f5]/70 pl-[13px]">Map data ©2016 Google, INEGI</div>
        <div className="flex w-[413px] justify-between bg-[#f5f5f5]/70 pr-[14px] pl-[14px]">
          <span>Terms of Use</span>
          <span>Report a map error</span>
        </div>
      </div>
    </div>
  );
}

/* ------------------------------------------------------------------ */
/* Page content                                                        */
/* ------------------------------------------------------------------ */

function PlaceField({ label, value, spacing }: { label: string; value: string; spacing: string }) {
  return (
    <>
      <label className={`text-[40px] leading-[29px] font-bold whitespace-nowrap ${spacing}`}>{label}</label>
      <div className="flex h-10 w-[311px] shrink-0 items-center border-t-2 border-r-2 border-b-[3px] border-t-[#a9a9a9] border-r-[#e6eef2] border-b-white bg-white pl-[5px] font-['Liberation_Sans',sans-serif] text-[23.300px] text-[#222] shadow-[inset_0_-2px_0_#b5b5b5]">
        {value}
      </div>
    </>
  );
}

function PushButton({ children, className }: { children: ReactNode; className: string }) {
  return (
    <button
      className={`flex shrink-0 items-center justify-center bg-[linear-gradient(#f4f4f4,#dcdcdc)] font-['Liberation_Sans',sans-serif] text-[23.300px] whitespace-nowrap text-[#111] ${className}`}
    >
      {children}
    </button>
  );
}

function Moon() {
  return (
    <svg viewBox="0 0 130 130" className="h-[130px] w-[130px]">
      <defs>
        <radialGradient id="moon" cx=".45" cy=".4" r=".6">
          <stop offset="0" stopColor="#e2dfc8" />
          <stop offset=".75" stopColor="#cfc9ac" />
          <stop offset="1" stopColor="#8f825f" />
        </radialGradient>
        <filter id="softMoon">
          <feGaussianBlur stdDeviation="2" />
        </filter>
      </defs>
      <ellipse cx="65" cy="65" rx="64" ry="65" fill="#fff" />
      <circle cx="65" cy="65" r="59" fill="#fdf5df" />
      <circle cx="65" cy="64" r="53" fill="url(#moon)" />
      <g fill="#8d7b58" filter="url(#softMoon)" opacity=".85">
        <ellipse cx="53" cy="61" rx="7" ry="10" />
        <path d="M22 84q14 0 22 8l18-4q4 14-2 26-26 6-38-30z" />
        <path d="M62 80q6-12 14-8t6 14-14 4-8 0z" />
        <path d="M62 38l8-10 2 8zM76 32l10 4 4 8-8-2z" />
        <ellipse cx="80" cy="98" rx="7" ry="4" />
        <path d="M108 46l7 18-6 20-4-18z" />
      </g>
    </svg>
  );
}

const RAYS = Array.from({ length: 16 }, (_, i) => ({ angle: i * 22.5, length: i % 4 === 0 ? 60 : i % 2 === 0 ? 61 : 48 }));

function Sun() {
  return (
    <svg viewBox="0 0 130 130" className="h-[130px] w-[130px]">
      <defs>
        <radialGradient id="sun">
          <stop offset="0" stopColor="#fffde6" />
          <stop offset=".6" stopColor="#fff99a" />
          <stop offset=".92" stopColor="#ffe95e" />
          <stop offset="1" stopColor="#f6a51c" />
        </radialGradient>
        <radialGradient id="halo">
          <stop offset=".6" stopColor="#f59a14" />
          <stop offset=".85" stopColor="#fcc545" />
          <stop offset="1" stopColor="#fde9b0" />
        </radialGradient>
      </defs>
      <g transform="translate(66 63) scale(.97)">
        {RAYS.map(({ angle, length }) => (
          <path key={angle} transform={`rotate(${angle})`} d={`M-6-36L-2-${length}H2L6-36Z`} fill="#fff" stroke="#fff" strokeWidth="3" />
        ))}
        <circle r="46" fill="#fff6df" />
        <circle r="44" fill="url(#halo)" />
        {RAYS.map(({ angle, length }) => (
          <g key={angle} transform={`rotate(${angle})`}>
            <path d={`M-6-33L0-${length}L6-33Z`} fill="#f7e27c" />
            <path d={`M1-34L0-${length}L6-33Z`} fill="#77704e" />
          </g>
        ))}
        <circle r="34" fill="url(#sun)" stroke="#f4a31c" strokeWidth="2" />
      </g>
    </svg>
  );
}

function Forecast({ title, icon, text, className }: { title: string; icon: ReactNode; text: string; className: string }) {
  return (
    <>
      <h1 className={`text-[79.800px] leading-[92px] font-bold whitespace-nowrap italic ${className}`}>{title}</h1>
      <div className="mt-[54px] flex h-[130px] items-end">
        {icon}
        <span className="text-[46.670px] leading-[31.500px] font-bold whitespace-nowrap">{text}</span>
      </div>
    </>
  );
}

function Content() {
  return (
    <main className="h-[1907px] bg-[#87ceeb] pt-[53px] font-['Liberation_Serif',serif] text-black">
      <h1 className="text-center text-[80px] leading-[92px] font-bold italic">welcome to maps and weather forcast !!</h1>
      <div className="mt-[160px] flex items-start pl-[427px]">
        <section className="w-[1626px]">
          <div className="flex h-10 items-start pl-[114px]">
            <PlaceField label="Source Place:" value="ohio" spacing="w-[241px]" />
            <PlaceField label="Destination Place:" value="oregon" spacing="w-[329px] pl-[10px]" />
            <PushButton className="ml-[10px] h-10 w-[186px] rounded-[4px] border-2 border-[#a3a3a3] border-b-[#8f8f8f] font-bold">
              Get Direction
            </PushButton>
          </div>
          <MapPanel />
        </section>
        <section className="ml-[507px] flex w-[856px] flex-col items-center pt-[155px]">
          <PushButton className="h-10 w-[279px] rounded-[4px] border-2 border-[#a3a3a3] border-b-[#8f8f8f]">Get weather for Source</PushButton>
          <Forecast className="mt-[53px]" title="Forecast For Ohio" icon={<Moon />} text="Current: Mostly Clear | 78F" />
          <PushButton className="mt-[65px] h-[42px] w-[322px] rounded-[4px] border-[3px] border-[#4d90fe]">
            Get weather for destination
          </PushButton>
          <Forecast className="mt-[54px]" title="Forecast For Oregon" icon={<Sun />} text="Current: Sunny | 71F" />
        </section>
      </div>
    </main>
  );
}

/* ------------------------------------------------------------------ */
/* Taskbar                                                             */
/* ------------------------------------------------------------------ */

function ChromeLogo() {
  return (
    <svg viewBox="0 0 56 56" className="h-14 w-14">
      <circle cx="28" cy="28" r="28" fill="#ffcd42" />
      <path d="M28 0a28 28 0 0 1 24.700 15H28a13 13 0 0 0-12 8L5.500 11A28 28 0 0 1 28 0z" fill="#db4437" />
      <path d="M5 12l12 20a13 13 0 0 0 14 9l-6 15A28 28 0 0 1 5 12z" fill="#0f9d58" />
      <circle cx="28" cy="28" r="13" fill="#fff" />
      <circle cx="28" cy="28" r="10.500" fill="#4285f4" />
    </svg>
  );
}

function FolderLogo() {
  return (
    <svg viewBox="0 0 54 46" className="h-[46px] w-[54px]">
      <path d="M0 2q0-2 2-2h20l4 5h26q2 0 2 2v34q0 2-2 2H2q-2 0-2-2z" fill="#ffd44f" />
      <path d="M0 10h24l3-5h27v36q0 2-2 2H2q-2 0-2-2z" fill="#ffe391" />
      <rect x="3" y="3" width="12" height="4" fill="#fff" />
      <rect x="3" y="3" width="4" height="4" fill="#1fb1ef" />
      <path d="M9 46V28q0-5 5-5h26q5 0 5 5v18H35V35H19v11z" fill="#1fb9f2" />
    </svg>
  );
}

function StoreLogo() {
  return (
    <svg viewBox="0 0 54 60" className="h-[60px] w-[54px]">
      <path d="M10 17q1-15 10-16 8 0 10 12M15 16q2-13 9-15 9-1 14 11" fill="none" stroke="#fff" strokeWidth="2.200" />
      <path d="M0 17L42 8l12 3v44l-12 5L0 52z" fill="#fff" />
      <path d="M9 26l10-2v11H9zM21 23.500L34 21v14H21zM9 37h10v9.500L9 45zM21 37h13v13l-13-2.500z" fill="#000308" />
    </svg>
  );
}

function NotesLogo() {
  return (
    <svg viewBox="0 0 60 56" className="h-14 w-[60px]">
      <path d="M1 0h29l8 7 6 5 13 39-40 3-16 2z" fill="#ececea" />
      <path d="M7 6h24M7 10h20M9 14h12M8 20h26M7 24h24M10 28h20M7 32h16M9 36h12M8 41h9" stroke="#777" strokeWidth="1.500" strokeDasharray="5 1.500 3 1" />
      <path d="M21 39l2-8L49 5l7 6-27 25z" fill="#f5c518" stroke="#9a7410" strokeWidth="1" />
      <path d="M49 5l5-5q6 0 7 5l-5 6z" fill="#ee6a5f" />
      <path d="M21 39l2-8 6 5z" fill="#dcb98a" />
    </svg>
  );
}

function VisioLogo() {
  return (
    <svg viewBox="0 0 56 54" className="h-[54px] w-14">
      <rect x="30" y="6" width="24" height="42" fill="#fff" stroke="#3955a3" strokeWidth="2" />
      <g fill="none" stroke="#3955a3" strokeWidth="2.500">
        <path d="M43 11l7 7-7 7-7-7zM43 25v7M36 32h10v9H33" />
      </g>
      <path d="M0 6l32-6v54L0 48z" fill="#3955a3" />
      <text x="8" y="37" className="fill-white font-['Open_Sans',sans-serif] text-[28px] font-bold">
        V
      </text>
    </svg>
  );
}

function TaskButton({ children, bar, active }: { children: ReactNode; bar?: string; active?: boolean }) {
  return (
    <div className={`relative flex h-[100px] items-center justify-center ${active ? "-mr-px w-[121px] bg-[#333438]" : "ml-[3px] w-[121px]"}`}>
      {children}
      {bar && <div className={`absolute bottom-0 h-[5px] bg-[#76b9ed] ${bar}`} />}
    </div>
  );
}

function Tray() {
  return (
    <div className="ml-auto flex items-center text-white">
      <svg viewBox="0 0 32 18" className="h-[18px] w-8">
        <path d="M1 17L16 2l15 15" fill="none" stroke="#fff" strokeWidth="2.500" />
      </svg>
      <svg viewBox="0 0 42 42" className="ml-[43px] h-[42px] w-[42px]">
        <ellipse cx="22" cy="19" rx="11" ry="22" transform="rotate(-38 22 19)" fill="#1d1d1d" stroke="#ddd" strokeWidth="2" />
        <path d="M2 28q6-10 14-10l6 8-6 14-6-8-6 4z" fill="#bdbdbd" />
        <circle cx="16" cy="25" r="5" fill="#f2f2f2" />
      </svg>
      <div className="relative ml-[37px] h-[38px] w-[42px]">
        <FaDropbox className="h-[38px] w-[38px]" />
        <svg viewBox="0 0 18 18" className="absolute right-0 bottom-0 h-[19px] w-[19px]">
          <circle cx="9" cy="9" r="9" fill="#2eb135" />
          <path d="M4.500 9.500l3 3 6-7" fill="none" stroke="#fff" strokeWidth="2" />
        </svg>
      </div>
      <svg viewBox="0 0 40 28" className="ml-[38px] h-7 w-10" fill="none" stroke="#fff" strokeWidth="2.200">
        <path d="M13 6h23v20H7M36 11h3v9h-3M3 0v6M9 0v6M1 6h10v5q0 4-5 4t-5-4zM6 15v12" />
        <path d="M9 24V19l5-5v10z" fill="#fff" stroke="none" />
      </svg>
      <svg viewBox="0 0 32 32" className="ml-[45px] h-8 w-8" fill="none" stroke="#fff" strokeWidth="2.200">
        <path d="M2 31A28 28 0 0 1 31 2M9 31A22 22 0 0 1 31 10M16 31A15 15 0 0 1 31 17" />
        <circle cx="27.500" cy="27.500" r="3" fill="#fff" stroke="none" />
      </svg>
      <svg viewBox="0 0 42 36" className="ml-[43px] h-9 w-[42px]" fill="none" stroke="#fff" strokeWidth="2.200">
        <path d="M1 12h6l7-7v26l-7-7H1zM20 12q5 6 0 12M26 8q8 10 0 20M33 2q12 16 0 32" />
      </svg>
      <svg viewBox="0 0 40 36" className="ml-[38px] h-9 w-10">
        <path d="M13 0h14l13 23H26z" fill="#ffcf48" />
        <path d="M13 0l7 12L7 36 0 23z" fill="#11a861" />
        <path d="M14 23h26l-7 13H7z" fill="#4285f4" />
      </svg>
      <svg viewBox="0 0 40 40" className="ml-[40px] h-10 w-10">
        <path d="M0 0h40v33H25l-5 7-5-7H0z" fill="#fff" />
        <path d="M8 9h24M8 17h24M8 25h16" stroke="#000308" strokeWidth="2.400" />
      </svg>
      <svg viewBox="0 0 70 40" className="ml-[35px] h-10 w-[70px]">
        <rect x="1.500" y="1.500" width="67" height="36" rx="2" fill="none" stroke="#fff" strokeWidth="3" />
        <path d="M9 11h52M9 19.500h52" stroke="#fff" strokeWidth="3" strokeDasharray="3 2.500" />
        <path d="M9 28h8M21 28h28M53 28h8" stroke="#fff" strokeWidth="3" />
      </svg>
      <div className="-mt-0.5 ml-[37px] w-[122px] text-center text-[29.500px] leading-[43px] -tracking-[0.700px] whitespace-nowrap">
        <div>10:27 PM</div>
        <div>9/7/2016</div>
      </div>
      <div className="ml-[23px] h-[100px] w-[3px] bg-[#6a6b6e]" />
      <div className="w-[10px]" />
    </div>
  );
}

function Taskbar() {
  return (
    <footer className="flex h-[100px] items-center bg-[#000308] font-['Open_Sans',sans-serif]">
      <div className="flex w-[120px] justify-center">
        <svg viewBox="0 0 40 40" className="h-10 w-10" fill="#fff">
          <path d="M0 5.500l16-2.300v15.800H0zM18 2.900L40 0v19H18zM0 21h16v15.500L0 34.500zM18 21h22v19l-22-3.100z" />
        </svg>
      </div>
      <div className="h-[100px] w-[860px] bg-[#333] pl-[31px] text-[36px] leading-[104px] -tracking-[0.380px] text-[#9d9d9d]">Search the web and Windows</div>
      <div className="flex w-[126px] justify-center pr-[6px]">
        <svg viewBox="0 0 50 38" className="h-[38px] w-[50px]" fill="none" stroke="#fff" strokeWidth="2.500">
          <rect x="10" y="1.500" width="30" height="35" />
          <path d="M7 7H2v24h5M43 7h5v24h-5" />
        </svg>
      </div>
      <TaskButton active bar="inset-x-0">
        <ChromeLogo />
      </TaskButton>
      <TaskButton>
        <FaEdgeLegacy className="h-[55px] w-[55px] text-[#0078d7]" />
      </TaskButton>
      <TaskButton bar="inset-x-[10px]">
        <FolderLogo />
      </TaskButton>
      <TaskButton>
        <StoreLogo />
      </TaskButton>
      <TaskButton bar="inset-x-[10px]">
        <NotesLogo />
      </TaskButton>
      <TaskButton bar="inset-x-[10px]">
        <div className="flex h-14 w-14 items-center justify-center rounded-full bg-[linear-gradient(#432580,#8e2a8c)]">
          <FaGithub className="h-[58px] w-[58px] shrink-0 text-[#e9ecf8]" />
        </div>
      </TaskButton>
      <TaskButton bar="left-[10px] w-[78px] shadow-[23px_0_0_#5285ad]">
        <VisioLogo />
      </TaskButton>
      <Tray />
    </footer>
  );
}

export default function App() {
  return (
    <div className="h-[2160px] w-[3840px] overflow-hidden bg-[#87ceeb]">
      <Browser />
      <Content />
      <Taskbar />
    </div>
  );
}
